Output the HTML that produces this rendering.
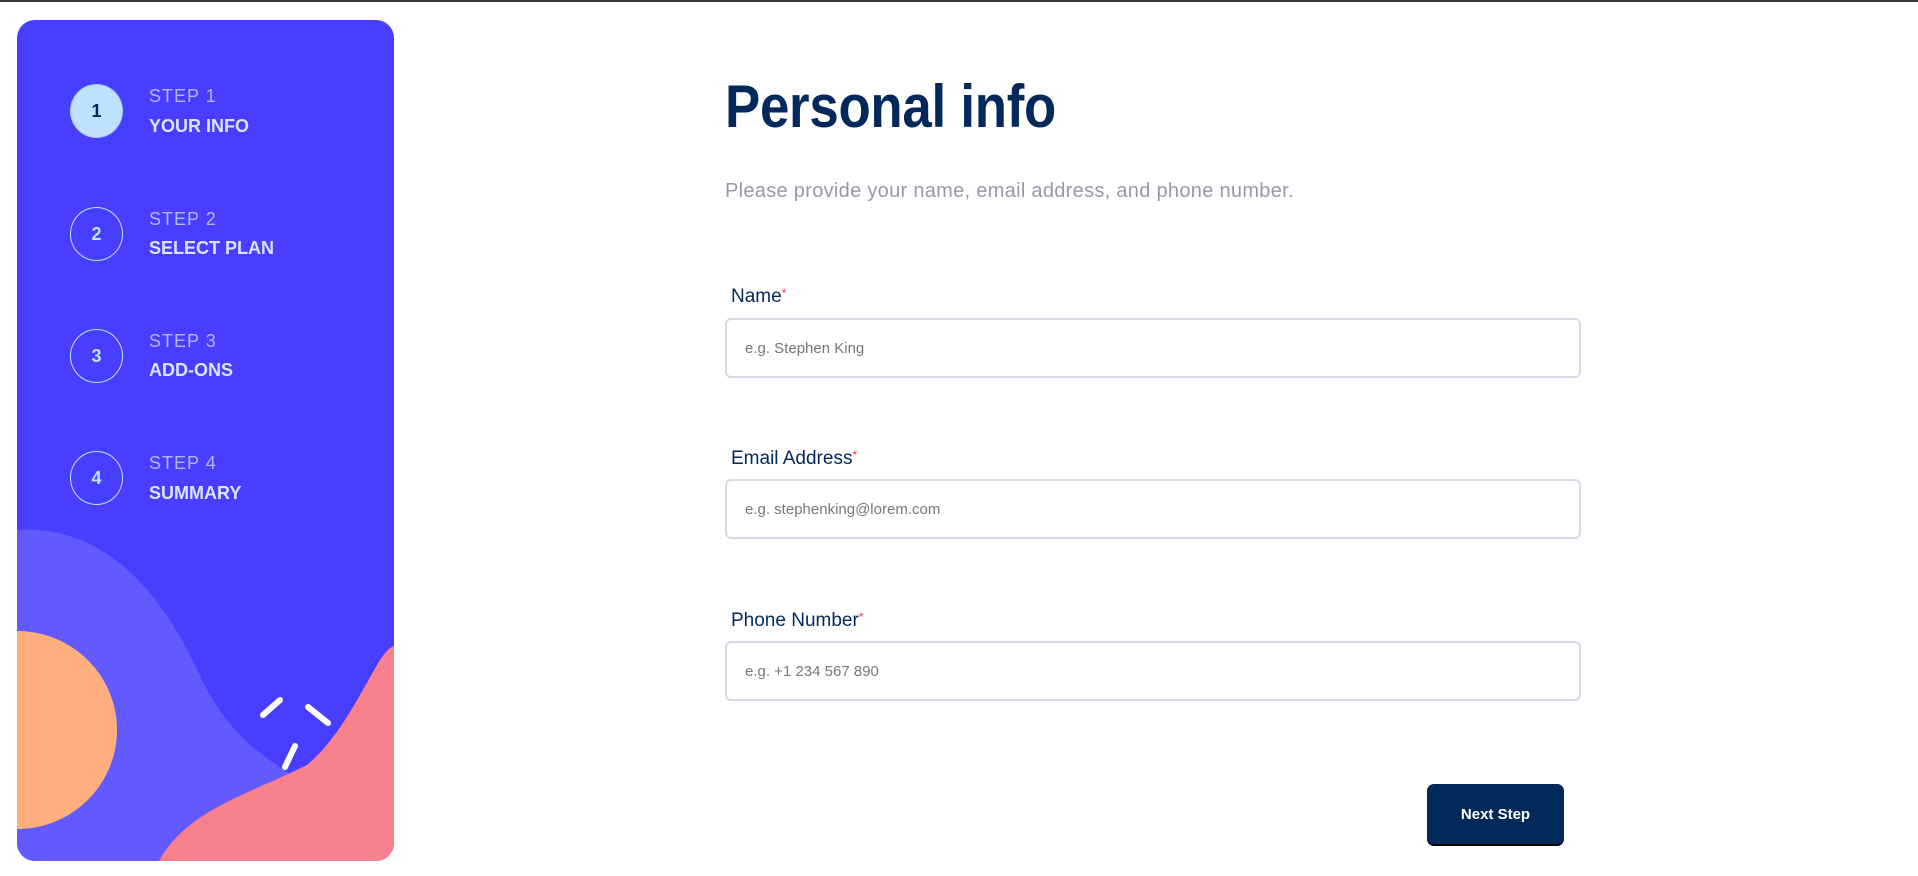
<!DOCTYPE html>
<html><head><meta charset="utf-8"><style>
*{margin:0;padding:0;box-sizing:border-box}
body{width:1918px;height:876px;background:#fff;font-family:"Liberation Sans",sans-serif;position:relative;overflow:hidden}
.top{position:absolute;left:0;top:0;width:1918px;height:2px;background:#3a3a3a}
.panel{position:absolute;left:17px;top:20px;width:377px;height:841px;background:#483EFF;border-radius:18px;overflow:hidden}
.c{position:absolute;left:53px;width:53px;height:54px;border:1.5px solid #BEE2FD;border-radius:50%;color:#BEE2FD;font-weight:bold;font-size:18px;display:flex;align-items:center;justify-content:center}
.c.a{background:#BEE2FD;color:#02295A;border-color:#a9c9f0}
.s{position:absolute;left:132px;color:#ABBCFF;font-size:18px;letter-spacing:1px}
.l{position:absolute;left:132px;color:#D6E6FF;font-size:18px;font-weight:bold}
h1{position:absolute;left:725px;top:72px;font-size:60px;color:#02295A;font-weight:bold;transform:scaleX(.88);transform-origin:left;white-space:nowrap;letter-spacing:-0.3px}
.sub{position:absolute;left:725px;top:180px;font-size:20px;color:#9699AA;white-space:nowrap;letter-spacing:0.3px}
.lab{position:absolute;left:731px;font-size:19px;color:#02295A}
.lab b{color:#EE374A;font-weight:normal;font-size:12px;vertical-align:top}
.in{position:absolute;left:725px;width:856px;height:60px;border:2px solid #D6D9E6;border-radius:6px;padding-left:18px;display:flex;align-items:center;color:#777;font-size:15px}
.btn{position:absolute;left:1427px;top:784px;width:137px;height:60px;background:#02295A;border-radius:7px;color:#fff;font-weight:bold;font-size:15px;display:flex;align-items:center;justify-content:center;box-shadow:0 2px 0 #000}
</style></head><body>
<div class="top"></div>
<div class="panel">
<svg width="377" height="841" style="position:absolute;left:0;top:0">
<path d="M0 510 C80 505 140 560 185 660 C215 720 250 740 300 770 L330 841 L0 841Z" fill="#6259FF"/>
<ellipse cx="0" cy="710" rx="100" ry="99" fill="#FFAF7E"/>
<path d="M142 841 C170 790 230 775 290 745 C320 720 340 680 360 645 C368 632 372 628 377 626 L377 841Z" fill="#F9818E"/>
<g stroke="#fff" stroke-width="6" stroke-linecap="round">
<line x1="246" y1="695" x2="263" y2="680"/>
<line x1="291" y1="687" x2="311" y2="703"/>
<line x1="268" y1="747" x2="278" y2="726"/>
</g>
</svg>
<div class="c a" style="top:64px">1</div>
<div class="s" style="top:66px">STEP 1</div><div class="l" style="top:96px">YOUR INFO</div>
<div class="c" style="top:187px">2</div>
<div class="s" style="top:189px">STEP 2</div><div class="l" style="top:218px">SELECT PLAN</div>
<div class="c" style="top:309px">3</div>
<div class="s" style="top:311px">STEP 3</div><div class="l" style="top:340px">ADD-ONS</div>
<div class="c" style="top:431px">4</div>
<div class="s" style="top:433px">STEP 4</div><div class="l" style="top:463px">SUMMARY</div>
</div>
<h1>Personal info</h1>
<div class="sub">Please provide your name, email address, and phone number.</div>
<div class="lab" style="top:286px">Name<b>*</b></div>
<div class="in" style="top:318px">e.g. Stephen King</div>
<div class="lab" style="top:448px">Email Address<b>*</b></div>
<div class="in" style="top:479px">e.g. stephenking@lorem.com</div>
<div class="lab" style="top:610px">Phone Number<b>*</b></div>
<div class="in" style="top:641px">e.g. +1 234 567 890</div>
<div class="btn">Next Step</div>
</body></html>
